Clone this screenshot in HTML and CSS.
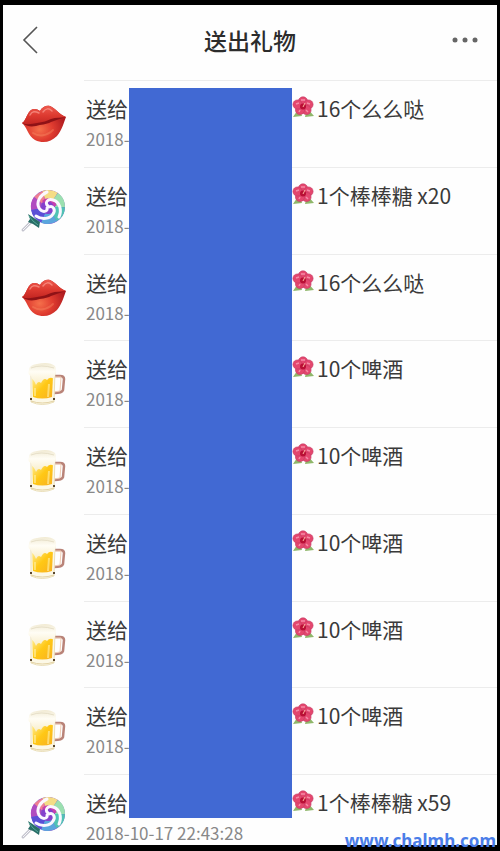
FILE: index.html
```
<!DOCTYPE html>
<html lang="zh-CN">
<head>
  <meta charset="UTF-8">
  <meta name="viewport" content="width=device-width, initial-scale=1">
  <title>送出礼物</title>
  <link rel="stylesheet" href="styles.css">
</head>
<body>
  <!-- shared gift drawings -->
  <svg class="sprites" aria-hidden="true">
    <defs>
      <linearGradient id="lip-top" x1="0" y1="0" x2="0" y2="1">
        <stop offset="0" stop-color="#ee5a4e"/>
        <stop offset=".5" stop-color="#dd3a30"/>
        <stop offset="1" stop-color="#c02320"/>
      </linearGradient>
      <radialGradient id="lip-bottom" cx=".4" cy=".65" r=".6">
        <stop offset="0" stop-color="#f5704b"/>
        <stop offset=".5" stop-color="#e03c30"/>
        <stop offset="1" stop-color="#b01c20"/>
      </radialGradient>
      <linearGradient id="beer-fill" x1="0" y1="0" x2="1" y2="1">
        <stop offset="0" stop-color="#fff0a0"/>
        <stop offset=".5" stop-color="#ffc815"/>
        <stop offset="1" stop-color="#f8b020"/>
      </linearGradient>
      <linearGradient id="beer-foam" x1="0" y1="0" x2="0" y2="1">
        <stop offset="0" stop-color="#f1ead2"/>
        <stop offset=".4" stop-color="#fffdf5"/>
        <stop offset="1" stop-color="#f8edc8"/>
      </linearGradient>
    </defs>

    <symbol id="lips" viewBox="0 0 48 48">
      <path d="M2 23C5 22 7 14 10 11C13 8 17 9 20 11C22 7 26 5 30 6C35 8 40 15 46 17C44 22 42 30 37 36C31 42 23 44 15 40C8 36 7 27 2 23Z" fill="url(#lip-bottom)"/>
      <path d="M2 23C5 22 7 14 10 11C13 8 17 9 20 11C22 7 26 5 30 6C35 8 40 15 46 17C40 18 35 18 30 21C26 24 20 23 15 25C10 26 6 25 2 23Z" fill="url(#lip-top)"/>
      <path d="M2 23C7 25 12 24 17 23C23 22 27 21 31 19C36 17 41 18 46 17C40 19 36 20 31 22C26 25 21 24 16 26C10 27 6 26 2 23Z" fill="#8f1216"/>
      <path d="M10 15C12 11 15 11 19 13M23 12C26 8 29 8 32 11" fill="none" stroke="#ffa89c" stroke-width="1.5" stroke-linecap="round" opacity=".6"/>
      <path d="M13 33C19 37 27 36 33 30" fill="none" stroke="#ffa273" stroke-width="2" stroke-linecap="round" opacity=".3"/>
    </symbol>

    <symbol id="lollipop" viewBox="0 0 48 48">
      <path d="M12 34L3 43" stroke="#c4c4ce" stroke-width="3" stroke-linecap="round"/>
      <path d="M12 34L3 43" stroke="#f5f5f8" stroke-width="1"/>
      <g transform="translate(28 20)" fill="none">
        <circle r="17" fill="#8a5ad0"/>
        <!-- coloured rim -->
        <g stroke-width="10">
          <path d="M-4 -11A12 12 0 0 1 7 -10" stroke="#f4dc86"/>
          <path d="M7 -10A12 12 0 0 1 12 0" stroke="#9be0b0"/>
          <path d="M12 0A12 12 0 0 1 6 10" stroke="#4fc3b4"/>
          <path d="M6 10A12 12 0 0 1 -5 11" stroke="#5aa6dd"/>
          <path d="M-5 11A12 12 0 0 1 -12 2" stroke="#5b4fd6"/>
          <path d="M-12 2A12 12 0 0 1 -10 -7" stroke="#b04cc0"/>
          <path d="M-10 -7A12 12 0 0 1 -4 -11" stroke="#ef7f93"/>
        </g>
        <circle r="7" fill="#8440cc"/>
        <path d="M-5 -5A7 7 0 0 1 7 -1" stroke="#c63fae" stroke-width="3"/>
        <!-- white swirl -->
        <g stroke="#fbf7ff" stroke-width="3" stroke-linecap="round">
          <path d="M1 0C5 -2 8 3 5 7C2 12 -6 13 -12 9"/>
          <path d="M-1 1C0 5 -6 6 -9 1C-12 -5 -8 -12 -1 -15"/>
          <path d="M0 -1C-4 -4 0 -9 5 -7C12 -5 14 3 11 10"/>
        </g>
      </g>
      <path d="M8 27L14 31L20 35L19 41L13 37L8 35L10 32Z" fill="#286d67"/>
      <path d="M9 29L13 34L18 38" fill="none" stroke="#55aa98"/>
    </symbol>

    <symbol id="beer" viewBox="0 0 48 48">
      <path d="M34 16H40Q44 16 44 19L43 30Q42 33 34 33" fill="none" stroke="#b98378" stroke-width="2.500"/>
      <path d="M35 17H41L40 31L34 32" fill="none" stroke="#f1cdb4" stroke-width="1"/>
      <path d="M11 11H35L34 42Q22 47 11 42Z" fill="#fcf8e6" stroke="#eadfba" stroke-width="1"/>
      <path d="M12 16H33L32 37Q22 40 13 37Z" fill="url(#beer-fill)"/>
      <path d="M9 10Q9 5 17 4Q29 1 35 6Q37 10 35 15L34 19Q30 16 27 20Q24 17 21 23Q18 20 16 25Q14 20 12 19L11 16Q7 14 9 10Z" fill="url(#beer-foam)"/>
      <path d="M11 8Q21 4 34 8" fill="none" stroke="#e6dfc8" stroke-width="1"/>
      <path d="M15 28V36M29 24L28 37" stroke="#fff1a4" stroke-width="2" opacity=".6"/>
      <path d="M11 41Q22 45 34 41" fill="none" stroke="#e3d2a4" stroke-width="1"/>
      <path d="M11 38V40M34 38V40" stroke="#5b472e" stroke-width="2"/>
    </symbol>

    <symbol id="flower" viewBox="0 0 22 22">
      <path d="M7 12L1 21L10 20ZM15 12L22 20L13 21Z" fill="#8fb76a"/>
      <g fill="#e4476e" stroke="#c53a66" stroke-width=".6">
        <circle cx="11" cy="5.500" r="4.700"/>
        <circle cx="16.500" cy="8.500" r="4.600"/>
        <circle cx="14.500" cy="14" r="4.600"/>
        <circle cx="8" cy="14" r="4.600"/>
        <circle cx="5.500" cy="8.500" r="4.600"/>
      </g>
      <path d="M9 4L13 4M4 8L7 7M15 7L18 8M7 16L8 14M14 14L16 16" stroke="#f58ba6" stroke-width="1.500"/>
      <circle cx="11" cy="10.500" r="3" fill="#b90f35"/>
      <path d="M11 11L13 7" stroke="#ffb6a0" stroke-width="1"/>
    </symbol>
  </svg>

  <div class="screen">
    <header class="topbar">
      <button class="icon-btn" type="button" aria-label="返回">
        <svg width="18" height="30" viewBox="0 0 18 30"><path d="M16 2L3 15L16 28" fill="none" stroke="#555" stroke-width="1.600"/></svg>
      </button>
      <h1>送出礼物</h1>
      <button class="icon-btn more" type="button" aria-label="更多">
        <svg width="28" height="8" viewBox="0 0 28 8" fill="#666"><circle cx="4" cy="4" r="2.500"/><circle cx="14" cy="4" r="2.500"/><circle cx="24" cy="4" r="2.500"/></svg>
      </button>
    </header>

    <main class="gifts">
      <ul class="gift-list">
        <li class="gift">
          <svg class="gift-icon"><use href="#lips"/></svg>
          <div class="gift-body">
            <p class="gift-line"><span class="to">送给</span><svg class="flower"><use href="#flower"/></svg><span>16个么么哒</span></p>
            <p class="date">2018-</p>
          </div>
        </li>
        <li class="gift">
          <svg class="gift-icon"><use href="#lollipop"/></svg>
          <div class="gift-body">
            <p class="gift-line"><span class="to">送给</span><svg class="flower"><use href="#flower"/></svg><span>1个棒棒糖 x20</span></p>
            <p class="date">2018-</p>
          </div>
        </li>
        <li class="gift">
          <svg class="gift-icon"><use href="#lips"/></svg>
          <div class="gift-body">
            <p class="gift-line"><span class="to">送给</span><svg class="flower"><use href="#flower"/></svg><span>16个么么哒</span></p>
            <p class="date">2018-</p>
          </div>
        </li>
        <li class="gift">
          <svg class="gift-icon"><use href="#beer"/></svg>
          <div class="gift-body">
            <p class="gift-line"><span class="to">送给</span><svg class="flower"><use href="#flower"/></svg><span>10个啤酒</span></p>
            <p class="date">2018-</p>
          </div>
        </li>
        <li class="gift">
          <svg class="gift-icon"><use href="#beer"/></svg>
          <div class="gift-body">
            <p class="gift-line"><span class="to">送给</span><svg class="flower"><use href="#flower"/></svg><span>10个啤酒</span></p>
            <p class="date">2018-</p>
          </div>
        </li>
        <li class="gift">
          <svg class="gift-icon"><use href="#beer"/></svg>
          <div class="gift-body">
            <p class="gift-line"><span class="to">送给</span><svg class="flower"><use href="#flower"/></svg><span>10个啤酒</span></p>
            <p class="date">2018-</p>
          </div>
        </li>
        <li class="gift">
          <svg class="gift-icon"><use href="#beer"/></svg>
          <div class="gift-body">
            <p class="gift-line"><span class="to">送给</span><svg class="flower"><use href="#flower"/></svg><span>10个啤酒</span></p>
            <p class="date">2018-</p>
          </div>
        </li>
        <li class="gift">
          <svg class="gift-icon"><use href="#beer"/></svg>
          <div class="gift-body">
            <p class="gift-line"><span class="to">送给</span><svg class="flower"><use href="#flower"/></svg><span>10个啤酒</span></p>
            <p class="date">2018-</p>
          </div>
        </li>
        <li class="gift">
          <svg class="gift-icon"><use href="#lollipop"/></svg>
          <div class="gift-body">
            <p class="gift-line"><span class="to">送给</span><svg class="flower"><use href="#flower"/></svg><span>1个棒棒糖 x59</span></p>
            <p class="date">2018-10-17 22:43:28</p>
          </div>
        </li>
      </ul>
      <!-- hides the receiver names -->
      <div class="mask"></div>
    </main>
  </div>
  <div class="watermark">www.chalmh.com</div>
</body>
</html>
```
FILE: styles.css
```
* {
  box-sizing: border-box;
}

body {
  margin: 0;
  min-height: 100vh;
  display: flex;
  padding: 5px 3px 6px;
  position: relative;
  background: #000;
  color: #3a3a3a;
  font-family: "Noto Sans CJK SC", sans-serif;
}

h1, p, ul {
  margin: 0;
  padding: 0;
}

.sprites {
  position: absolute;
  width: 0;
  height: 0;
}

.screen {
  flex: 1;
  display: flex;
  flex-direction: column;
  background: #fefefe;
}

/* Top bar */
.topbar {
  display: grid;
  grid-template-columns: 60px 1fr 60px;
  align-items: center;
  height: 75px;
  padding-bottom: 5px;
}

.topbar h1 {
  text-align: center;
  color: #2c2c2c;
  font-size: 23px;
  font-weight: 500;
  line-height: 32px;
}

.icon-btn {
  display: flex;
  padding: 0 0 0 18px;
  border: none;
  background: none;
  cursor: pointer;
}

.more {
  justify-content: flex-end;
  padding: 0 18px 0 0;
}

/* Gift records */
.gifts {
  flex: 1;
  display: flex;
  position: relative;
}

.gift-list {
  flex: 1;
  display: grid;
  grid-template-rows: repeat(8, 87fr) 71fr;
  list-style: none;
}

.gift {
  display: flex;
  gap: 16px;
  padding-left: 17px;
}

.gift-icon {
  flex: none;
  width: 48px;
  height: 48px;
  margin-top: 20px;
}

.gift-body {
  flex: 1;
  padding: 12px 0 0 2px;
  border-top: 1px solid #ececec;
}

.gift-line {
  display: flex;
  font-size: 21px;
  line-height: 30px;
}

.to {
  width: 206px;
}

.flower {
  width: 22px;
  height: 22px;
  margin: 3px 3px 0 0;
}

.date {
  margin-top: 5px;
  color: #888;
  font-size: 17px;
  line-height: 22px;
}

.mask {
  position: absolute;
  top: 8px;
  bottom: 27px;
  left: 126px;
  width: 163px;
  background: #4169d3;
}

.watermark {
  position: absolute;
  right: 4px;
  bottom: 0;
  color: #4a7de8;
  font-family: "Noto Sans", sans-serif;
  font-size: 17px;
  font-weight: 700;
  line-height: 20px;
}
```
